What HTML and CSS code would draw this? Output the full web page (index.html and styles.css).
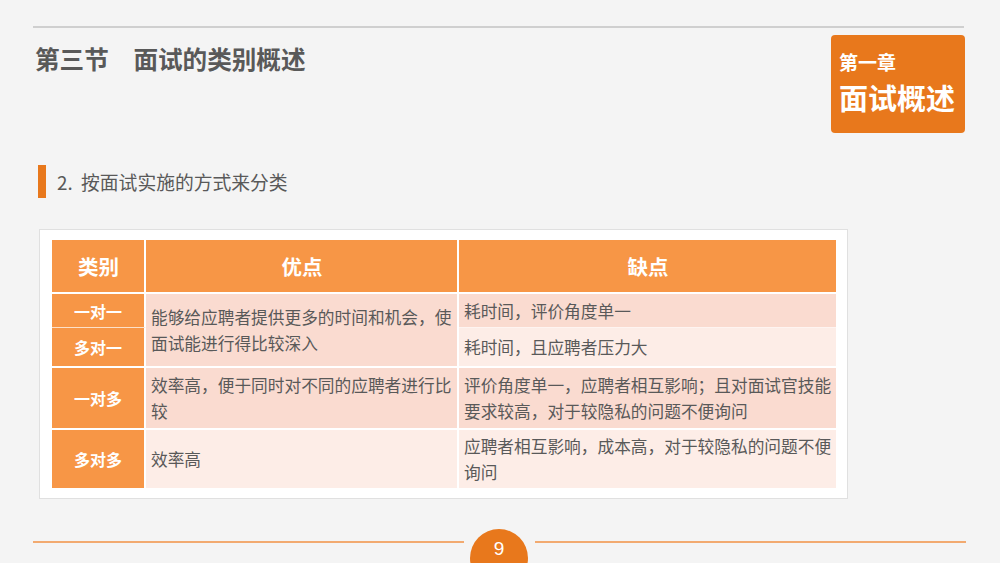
FILE: index.html
```html
<!DOCTYPE html>
<html lang="zh">
<head>
<meta charset="utf-8">
<title>第三节 面试的类别概述</title>
<link rel="stylesheet" href="styles.css">
</head>
<body>
<div class="slide">
  <div class="top-rule"></div>
  <div class="header">
    <h1 class="title">第三节　面试的类别概述</h1>
    <div class="chapter">
      <div class="chapter-no">第一章</div>
      <div class="chapter-name">面试概述</div>
    </div>
  </div>
  <div class="subtitle">
    <span class="subtitle-bar"></span>
    <span class="subtitle-text">2.&nbsp; 按面试实施的方式来分类</span>
  </div>
  <div class="panel">
    <table class="grid">
      <colgroup>
        <col class="c1"><col class="c2"><col class="c3">
      </colgroup>
      <thead>
        <tr class="r-head">
          <th>类别</th>
          <th>优点</th>
          <th>缺点</th>
        </tr>
      </thead>
      <tbody>
        <tr class="r1">
          <td class="kind">一对一</td>
          <td class="dark" rowspan="2">能够给应聘者提供更多的时间和机会，使面试能进行得比较深入</td>
          <td class="dark">耗时间，评价角度单一</td>
        </tr>
        <tr class="r2">
          <td class="kind">多对一</td>
          <td class="light">耗时间，且应聘者压力大</td>
        </tr>
        <tr class="r3">
          <td class="kind">一对多</td>
          <td class="dark">效率高，便于同时对不同的应聘者进行比较</td>
          <td class="dark">评价角度单一，应聘者相互影响；且对面试官技能要求较高，对于较隐私的问题不便询问</td>
        </tr>
        <tr class="r4">
          <td class="kind">多对多</td>
          <td class="light">效率高</td>
          <td class="light">应聘者相互影响，成本高，对于较隐私的问题不便询问</td>
        </tr>
      </tbody>
    </table>
  </div>
  <div class="footer">
    <span class="footer-line"></span>
    <span class="page-no">9</span>
    <span class="footer-line"></span>
  </div>
</div>
</body>
</html>
```

FILE: styles.css
```css
html, body {
  margin: 0;
  padding: 0;
  width: 1000px;
  height: 563px;
  overflow: hidden;
  background: #f4f4f4;
}

.slide {
  width: 1000px;
  height: 563px;
  overflow: hidden;
  font-family: "Noto Sans CJK SC", "Noto Sans", sans-serif;
  color: #595959;
}

.top-rule {
  margin: 26px 0 0 33px;
  width: 931px;
  height: 2px;
  background: #cfcfcf;
}

.header {
  display: flex;
  justify-content: space-between;
  align-items: flex-start;
  margin: 7px 35px 0 35px;
}

.title {
  margin: 10px 0 0 0;
  font-size: 24.6px;
  line-height: 27px;
  font-weight: 700;
  color: #595959;
}

.chapter {
  width: 134px;
  height: 98px;
  box-sizing: border-box;
  padding: 16px 0 0 8px;
  background: #e8781c;
  border-radius: 4px;
  color: #fff;
  font-weight: 700;
}

.chapter-no {
  font-size: 19px;
  line-height: 22px;
}

.chapter-name {
  margin-top: 8px;
  font-size: 29px;
  line-height: 32px;
}

.subtitle {
  display: flex;
  align-items: center;
  margin: 32px 0 0 38px;
  height: 33px;
}

.subtitle-bar {
  width: 8px;
  height: 33px;
  background: #e8781c;
}

.subtitle-text {
  margin-left: 11px;
  font-size: 18.8px;
  line-height: 24px;
  color: #595959;
}

.panel {
  margin: 31px 0 0 39px;
  width: 809px;
  height: 270px;
  box-sizing: border-box;
  padding: 10px 0 0 12px;
  background: #fff;
  border: 1px solid #e0e0e0;
}

.grid {
  width: 784px;
  table-layout: fixed;
  border-collapse: separate;
  border-spacing: 0;
}

.c1 { width: 94px; }
.c2 { width: 313px; }
.c3 { width: 377px; }

.grid th,
.grid td {
  box-sizing: border-box;
  padding: 0 4px 0 5px;
  border-right: 2px solid #fff;
  border-bottom: 2px solid #fff;
  vertical-align: middle;
  font-size: 16.7px;
  line-height: 26px;
  text-align: left;
}

.grid th:last-child,
.grid td:last-child {
  border-right: 0;
}

.grid th {
  height: 54px;
  background: #f79646;
  color: #fff;
  font-size: 20.5px;
  font-weight: 700;
  text-align: center;
}

.grid td.kind {
  background: #f79646;
  color: #fff;
  font-weight: 700;
  font-size: 16px;
  text-align: center;
  padding: 0;
}

.grid td.dark { background: #fadbd0; }
.grid td.light { background: #fdede7; }

.r1 td { height: 34px; border-bottom-width: 1px; border-bottom-color: rgba(255, 255, 255, 0.7); }
.r1 td[rowspan] { border-bottom-width: 2px; border-bottom-color: #fff; }
.r2 td { height: 40px; }
.r3 td { height: 62px; }
.r4 td { height: 58px; border-bottom: 0; }

.footer {
  display: flex;
  align-items: flex-start;
  margin: 30px 0 0 33px;
  width: 933px;
}

.footer-line {
  flex: 1;
  height: 2px;
  margin-top: 12px;
  background: #f2aa70;
}

.page-no {
  width: 58px;
  height: 58px;
  margin: 0 7px 0 6px;
  border-radius: 50%;
  background: #e8781c;
  color: #fff;
  font-family: "Liberation Sans", Arial, sans-serif;
  font-size: 19px;
  line-height: 20px;
  text-align: center;
  box-sizing: border-box;
  padding-top: 10px;
}
```
